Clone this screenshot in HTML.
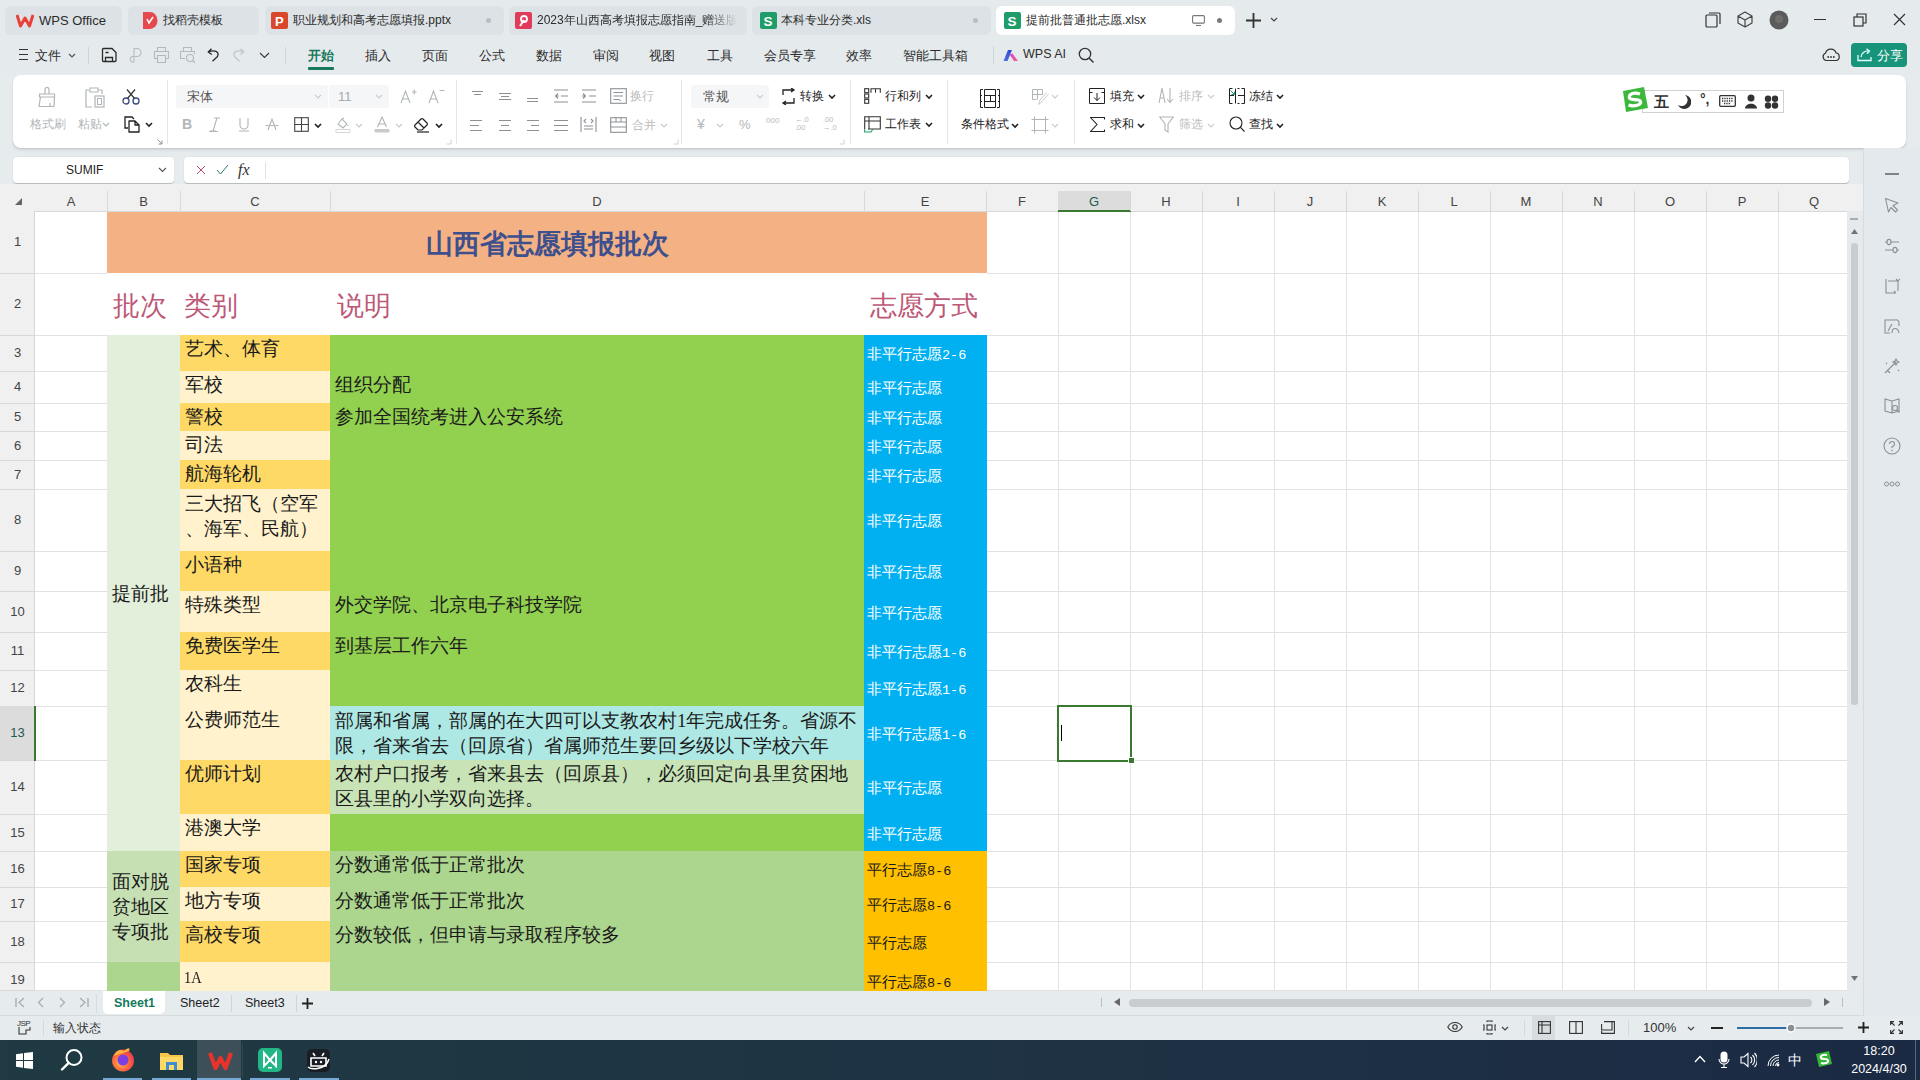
<!DOCTYPE html>
<html><head><meta charset="utf-8"><style>
body{margin:0;width:1920px;height:1080px;position:relative;overflow:hidden;background:#e6ebee;font-family:"Liberation Sans",sans-serif}
body div, body svg{position:absolute}
</style></head><body>
<div style="left:0px;top:0px;width:1920px;height:74px;background:#e5eaed"></div>
<div style="left:5px;top:6px;width:117px;height:29px;background:#dce2e5;border-radius:6px"></div>
<div style="left:128px;top:6px;width:131px;height:29px;background:#dce2e5;border-radius:6px"></div>
<div style="left:265px;top:6px;width:239px;height:29px;background:#dce2e5;border-radius:6px"></div>
<div style="left:509px;top:6px;width:238px;height:29px;background:#dce2e5;border-radius:6px"></div>
<div style="left:752px;top:6px;width:239px;height:29px;background:#dce2e5;border-radius:6px"></div>
<div style="left:996px;top:6px;width:239px;height:29px;background:#ffffff;border-radius:6px"></div>
<svg style="left:16px;top:13px;" width="18" height="15" viewBox="0 0 18 15"><path d="M1 2 L4.5 13 L9 5 L13.5 13 L17 2" fill="none" stroke="#e8413a" stroke-width="3" stroke-linejoin="round"/></svg>
<div style="left:39px;top:12px;white-space:nowrap;font-size:13px;line-height:17px;color:#2b2b2b">WPS Office</div>
<svg style="left:141px;top:11px;" width="17" height="19" viewBox="0 0 17 19"><path d="M2 1 H9 A7.5 8.5 0 0 1 9 18 H2 Z" fill="#e5484d"/><path d="M6 8 L8 12 L12 6" fill="none" stroke="#fff" stroke-width="1.6"/></svg>
<div style="left:163px;top:12px;white-space:nowrap;font-size:12px;line-height:17px;color:#2b2b2b">找稻壳模板</div>
<svg style="left:271px;top:12px;" width="17" height="17" viewBox="0 0 17 17"><rect x="0" y="0" width="17" height="17" rx="2" fill="#d9482b"/><text x="4" y="13.5" font-size="13" font-weight="bold" fill="#fff" font-family="Liberation Sans">P</text></svg>
<div style="left:293px;top:12px;white-space:nowrap;font-size:12px;line-height:17px;color:#2b2b2b">职业规划和高考志愿填报.pptx</div>
<div style="left:486px;top:18px;width:5px;height:5px;background:#b9bec1;border-radius:50%"></div>
<svg style="left:515px;top:12px;" width="17" height="17" viewBox="0 0 17 17"><rect x="0" y="0" width="17" height="17" rx="2" fill="#e23b5a"/><circle cx="9" cy="7" r="3" fill="none" stroke="#fff" stroke-width="1.8"/><path d="M5 14 L9 8" stroke="#fff" stroke-width="2"/></svg>
<div style="left:537px;top:12px;white-space:nowrap;font-size:12px;line-height:17px;color:#2b2b2b;width:200px;overflow:hidden;-webkit-mask-image:linear-gradient(90deg,#000 85%,transparent)">2023年山西高考填报志愿指南_赠送版</div>
<svg style="left:760px;top:12px;" width="17" height="17" viewBox="0 0 17 17"><rect x="0" y="0" width="17" height="17" rx="2" fill="#1f9d68"/><text x="3.5" y="13.5" font-size="13.5" font-weight="bold" fill="#fff" font-family="Liberation Sans">S</text></svg>
<div style="left:781px;top:12px;white-space:nowrap;font-size:12px;line-height:17px;color:#2b2b2b">本科专业分类.xls</div>
<div style="left:973px;top:18px;width:5px;height:5px;background:#b9bec1;border-radius:50%"></div>
<svg style="left:1004px;top:12px;" width="17" height="17" viewBox="0 0 17 17"><rect x="0" y="0" width="17" height="17" rx="2" fill="#1f9d68"/><text x="3.5" y="13.5" font-size="13.5" font-weight="bold" fill="#fff" font-family="Liberation Sans">S</text></svg>
<div style="left:1026px;top:12px;white-space:nowrap;font-size:12px;line-height:17px;color:#2b2b2b">提前批普通批志愿.xlsx</div>
<svg style="left:1192px;top:15px;" width="13" height="11" viewBox="0 0 13 11"><rect x="0.6" y="0.6" width="11.8" height="7.5" rx="1" fill="none" stroke="#777" stroke-width="1.1"/><path d="M4 10.5 H9" stroke="#777" stroke-width="1.1"/></svg>
<div style="left:1217px;top:18px;width:5px;height:5px;background:#7a7a7a;border-radius:50%"></div>
<svg style="left:1246px;top:13px;" width="15" height="15" viewBox="0 0 15 15"><path d="M7.5 0 V15 M0 7.5 H15" stroke="#333" stroke-width="1.8"/></svg>
<svg style="left:1270px;top:17px;" width="8" height="6" viewBox="0 0 8 6"><path d="M1 1 L4 4 L7 1" fill="none" stroke="#444" stroke-width="1.2"/></svg>
<svg style="left:1705px;top:12px;" width="16" height="16" viewBox="0 0 16 16"><rect x="1" y="3" width="11" height="12" rx="1" fill="none" stroke="#333" stroke-width="1.2"/><path d="M4 1 H14 A1 1 0 0 1 15 2 V12" fill="none" stroke="#333" stroke-width="1.2"/></svg>
<svg style="left:1737px;top:11px;" width="16" height="17" viewBox="0 0 16 17"><path d="M8 1 L15 5 V12 L8 16 L1 12 V5 Z M1 5 L8 9 L15 5 M8 9 V16" fill="none" stroke="#444" stroke-width="1.2" stroke-linejoin="round"/></svg>
<svg style="left:1769px;top:10px;" width="20" height="20" viewBox="0 0 20 20"><circle cx="10" cy="10" r="9.5" fill="#5b5b5b"/><circle cx="10" cy="9" r="4" fill="#6e6e6e"/></svg>
<div style="left:1814px;top:19px;width:12px;height:1.3px;background:#333"></div>
<svg style="left:1853px;top:13px;" width="14" height="14" viewBox="0 0 14 14"><rect x="1" y="4" width="9" height="9" fill="none" stroke="#333" stroke-width="1.2"/><path d="M4 4 V1 H13 V10 H10" fill="none" stroke="#333" stroke-width="1.2"/></svg>
<svg style="left:1893px;top:13px;" width="13" height="13" viewBox="0 0 13 13"><path d="M1 1 L12 12 M12 1 L1 12" stroke="#333" stroke-width="1.2"/></svg>
<svg style="left:19px;top:49px;" width="10" height="12" viewBox="0 0 10 12"><path d="M0 0.5 H9 M0 5.5 H9 M0 10.5 H9" stroke="#333" stroke-width="1"/></svg>
<div style="left:35px;top:47px;white-space:nowrap;font-size:13px;line-height:17px;color:#2b2b2b">文件</div>
<svg style="left:68px;top:53px;" width="8" height="5" viewBox="0 0 8 5"><path d="M1 1 L4 4 L7 1" fill="none" stroke="#555" stroke-width="1.2"/></svg>
<div style="left:88px;top:47px;width:1px;height:17px;background:#cfd5d8"></div>
<svg style="left:101px;top:47px;" width="17" height="16" viewBox="0 0 17 16"><path d="M1.5 2.5 A1 1 0 0 1 2.5 1.5 H11 L15 5.5 V13.5 A1 1 0 0 1 14 14.5 H2.5 A1 1 0 0 1 1.5 13.5 Z M4.5 5.5 H7.5 M4.5 14 V10.5 H11.5 V14" fill="none" stroke="#2b2b2b" stroke-width="1.3"/></svg>
<svg style="left:128px;top:47px;" width="14" height="16" viewBox="0 0 14 16"><path d="M6 9.5 V1.5 H9 A4 4 0 0 1 9 9.5 H6 M6 9.5 H4 A3 3 0 0 0 4 15 H6 V9.5" fill="none" stroke="#b5bbbe" stroke-width="1.1"/></svg>
<svg style="left:154px;top:47px;" width="15" height="16" viewBox="0 0 15 16"><path d="M3.5 4.5 V0.5 H11.5 V4.5 M3.5 11.5 H0.5 V4.5 H14.5 V11.5 H11.5 M3.5 8.5 H11.5 V15.5 H3.5 Z" fill="none" stroke="#b3b9bc" stroke-width="1.1"/></svg>
<svg style="left:180px;top:47px;" width="16" height="17" viewBox="0 0 16 17"><path d="M3.5 4.5 V0.5 H11.5 V4.5 M5 11.5 H0.5 V4.5 H14.5 V7" fill="none" stroke="#b3b9bc" stroke-width="1.1"/><circle cx="10" cy="11" r="3.5" fill="none" stroke="#b3b9bc" stroke-width="1.1"/><path d="M12.5 13.5 L15 16" stroke="#b3b9bc" stroke-width="1.1"/></svg>
<svg style="left:207px;top:48px;" width="13" height="14" viewBox="0 0 13 14"><path d="M4.5 0.8 L1.2 4 L4.8 6.5 M1.4 4 C7 1.5 13 3.5 10.5 8.5 L5.5 13.2" fill="none" stroke="#2b2b2b" stroke-width="1.3" stroke-linejoin="round"/></svg>
<svg style="left:232px;top:48px;" width="13" height="14" viewBox="0 0 13 14"><path d="M8.5 0.8 L11.8 4 L8.2 6.5 M11.6 4 C6 1.5 0 3.5 2.5 8.5 L7.5 13.2" fill="none" stroke="#c2c7ca" stroke-width="1.3" stroke-linejoin="round"/></svg>
<svg style="left:259px;top:52px;" width="11" height="7" viewBox="0 0 11 7"><path d="M1 1 L5.5 5.5 L10 1" fill="none" stroke="#3b3b3b" stroke-width="1.2"/></svg>
<div style="left:285px;top:47px;width:1px;height:17px;background:#cfd5d8"></div>
<div style="left:308.1px;top:47px;white-space:nowrap;font-size:13px;line-height:17px;color:#17785c;font-weight:bold">开始</div>
<div style="left:364.8px;top:47px;white-space:nowrap;font-size:13px;line-height:17px;color:#2b2b2b">插入</div>
<div style="left:422.3px;top:47px;white-space:nowrap;font-size:13px;line-height:17px;color:#2b2b2b">页面</div>
<div style="left:479.0px;top:47px;white-space:nowrap;font-size:13px;line-height:17px;color:#2b2b2b">公式</div>
<div style="left:535.5px;top:47px;white-space:nowrap;font-size:13px;line-height:17px;color:#2b2b2b">数据</div>
<div style="left:593.2px;top:47px;white-space:nowrap;font-size:13px;line-height:17px;color:#2b2b2b">审阅</div>
<div style="left:649.1px;top:47px;white-space:nowrap;font-size:13px;line-height:17px;color:#2b2b2b">视图</div>
<div style="left:706.5px;top:47px;white-space:nowrap;font-size:13px;line-height:17px;color:#2b2b2b">工具</div>
<div style="left:763.5px;top:47px;white-space:nowrap;font-size:13px;line-height:17px;color:#2b2b2b">会员专享</div>
<div style="left:846.1px;top:47px;white-space:nowrap;font-size:13px;line-height:17px;color:#2b2b2b">效率</div>
<div style="left:903.2px;top:47px;white-space:nowrap;font-size:13px;line-height:17px;color:#2b2b2b">智能工具箱</div>
<div style="left:308px;top:67px;width:26px;height:2.5px;background:#17785c;border-radius:1px"></div>
<div style="left:993px;top:46px;width:1px;height:18px;background:#cfd5d8"></div>
<svg style="left:1003px;top:49px;" width="16" height="13" viewBox="0 0 16 13"><defs><linearGradient id="ai1" x1="0" y1="1" x2="0.6" y2="0"><stop offset="0" stop-color="#5a6fe0"/><stop offset="1" stop-color="#2f4fd8"/></linearGradient><linearGradient id="ai2" x1="0" y1="0" x2="1" y2="1"><stop offset="0" stop-color="#c44fd0"/><stop offset="1" stop-color="#ff5a8a"/></linearGradient></defs><path d="M0.5 12 L5 1 H9 L4.5 12 Z" fill="url(#ai1)"/><path d="M6.5 5.5 L9.5 4.5 L15 12 H11 Z" fill="url(#ai2)"/></svg>
<div style="left:1023px;top:46px;white-space:nowrap;font-size:12.5px;line-height:17px;color:#2b2b2b">WPS AI</div>
<svg style="left:1078px;top:47px;" width="17" height="17" viewBox="0 0 17 17"><circle cx="7" cy="7" r="5.7" fill="none" stroke="#333" stroke-width="1.3"/><path d="M11 11 L15.5 15.5" stroke="#333" stroke-width="1.4"/></svg>
<svg style="left:1822px;top:47px;" width="18" height="15" viewBox="0 0 18 15"><path d="M4.5 13.5 A3.8 3.8 0 0 1 3.5 6.2 A5.5 5.5 0 0 1 14 5.8 A3.9 3.9 0 0 1 14 13.5 Z" fill="none" stroke="#333" stroke-width="1.2"/><circle cx="6.2" cy="10" r="0.9" fill="#333"/><circle cx="9" cy="10" r="0.9" fill="#333"/><circle cx="11.8" cy="10" r="0.9" fill="#333"/></svg>
<div style="left:1851px;top:43px;width:56px;height:24px;background:#17947a;border-radius:4px"></div>
<svg style="left:1857px;top:48px;" width="16" height="14" viewBox="0 0 16 14"><path d="M1 7 V12.5 H14 V9" fill="none" stroke="#dff" stroke-width="1.3"/><path d="M4 9 A7 7 0 0 1 12 3 M9.5 0.8 L12.5 3 L10 5.8" fill="none" stroke="#dff" stroke-width="1.3"/></svg>
<div style="left:1877px;top:47px;white-space:nowrap;font-size:13px;line-height:17px;color:#ffffff">分享</div>
<div style="left:13px;top:75px;width:1893px;height:73px;background:#fff;border-radius:8px;box-shadow:0 1px 0 #c5cacd,0 2px 3px rgba(0,0,0,0.10)"></div>
<svg style="left:37px;top:87px;" width="21" height="21" viewBox="0 0 21 21"><path d="M8 7 V2.5 A2 2 0 0 1 12 2.5 V7 M2.5 7 H17.5 V10 H2.5 Z M3.5 10 L2 19.5 H17 L17.5 10 M13 19.5 V16" fill="none" stroke="#b0b5b8" stroke-width="1.2" stroke-linejoin="round"/></svg>
<div style="left:30px;top:116px;white-space:nowrap;font-size:12px;line-height:16px;color:#b0b5b8">格式刷</div>
<svg style="left:84px;top:86px;" width="22" height="22" viewBox="0 0 22 22"><path d="M5 4 H2 V21 H8 M15 4 H18 V8 M6 2 H14 V6 H6 Z" fill="none" stroke="#b0b5b8" stroke-width="1.2"/><rect x="11" y="10" width="9" height="11" fill="none" stroke="#b0b5b8" stroke-width="1.2"/><rect x="13.5" y="12.5" width="4" height="6" fill="none" stroke="#b0b5b8" stroke-width="1"/></svg>
<div style="left:77.5px;top:116px;white-space:nowrap;font-size:12px;line-height:16px;color:#b0b5b8">粘贴</div>
<svg style="left:102px;top:122px;" width="8" height="6" viewBox="0 0 8 6"><path d="M1 1 L4 4 L7 1" fill="none" stroke="#b0b5b8" stroke-width="1.1"/></svg>
<svg style="left:122px;top:89px;" width="18" height="16" viewBox="0 0 18 16"><circle cx="4" cy="12" r="3" fill="none" stroke="#3a4a7a" stroke-width="1.3"/><circle cx="14" cy="12" r="3" fill="none" stroke="#3a4a7a" stroke-width="1.3"/><path d="M5.5 9.5 L13 0.5 M12.5 9.5 L5 0.5" stroke="#333" stroke-width="1.2"/></svg>
<svg style="left:124px;top:116px;" width="17" height="17" viewBox="0 0 17 17"><path d="M4 12 H1 V1 H8 L10 3" fill="none" stroke="#222" stroke-width="1.3"/><path d="M5 5 H11 L15 9 V16 H5 Z M11 5 V9 H15" fill="none" stroke="#222" stroke-width="1.3" stroke-linejoin="round"/></svg>
<svg style="left:145px;top:122px;" width="8" height="6" viewBox="0 0 8 6"><path d="M1 1 L4 4 L7 1" fill="none" stroke="#222" stroke-width="1.6"/></svg>
<svg style="left:157px;top:139px;" width="6" height="6" viewBox="0 0 6 6"><path d="M0.5 0.5 L5 5 M5 1.5 V5 H1.5" fill="none" stroke="#888" stroke-width="0.9"/></svg>
<div style="left:167px;top:80px;width:1px;height:64px;background:#e3e6e8"></div>
<div style="left:176px;top:85px;width:152px;height:23px;background:#f5f6f7;border-radius:3px"></div>
<div style="left:329px;top:85px;width:60px;height:23px;background:#f5f6f7;border-radius:3px"></div>
<div style="left:187px;top:89px;white-space:nowrap;font-size:12.5px;line-height:16px;color:#555">宋体</div>
<svg style="left:314px;top:94px;" width="8" height="6" viewBox="0 0 8 6"><path d="M1 1 L4 4 L7 1" fill="none" stroke="#ccc" stroke-width="1.1"/></svg>
<div style="left:338px;top:89px;white-space:nowrap;font-size:13px;line-height:16px;color:#aaa">11</div>
<svg style="left:375px;top:94px;" width="8" height="6" viewBox="0 0 8 6"><path d="M1 1 L4 4 L7 1" fill="none" stroke="#ccc" stroke-width="1.1"/></svg>
<svg style="left:400px;top:88px;" width="17" height="16" viewBox="0 0 17 16"><path d="M1 15 L5.5 3 L10 15 M2.7 11 H8.3 M12 4 H16.5 M14.25 1.5 V6.5" fill="none" stroke="#b0b5b8" stroke-width="1.1"/></svg>
<svg style="left:428px;top:88px;" width="17" height="16" viewBox="0 0 17 16"><path d="M1 15 L5.5 3 L10 15 M2.7 11 H8.3 M11.5 2.5 H16.5" fill="none" stroke="#b0b5b8" stroke-width="1.1"/></svg>
<div style="left:456px;top:80px;width:1px;height:64px;background:#e3e6e8"></div>
<div style="left:182px;top:116px;white-space:nowrap;font-size:14px;line-height:17px;color:#b0b5b8;font-weight:bold">B</div>
<svg style="left:208px;top:117px;" width="14" height="15" viewBox="0 0 14 15"><path d="M6 1 H12 M2 14 H8 M9 1 L5 14 M1 14.5 H10" fill="none" stroke="#b0b5b8" stroke-width="1.1"/></svg>
<svg style="left:238px;top:117px;" width="12" height="15" viewBox="0 0 12 15"><path d="M2 1 V8 A4 4 0 0 0 10 8 V1 M1 14 H11" fill="none" stroke="#b0b5b8" stroke-width="1.1"/></svg>
<svg style="left:265px;top:117px;" width="14" height="15" viewBox="0 0 14 15"><path d="M3 13 L7 2 L11 13 M0.5 8.5 H13.5" fill="none" stroke="#b0b5b8" stroke-width="1.1"/></svg>
<svg style="left:294px;top:117px;" width="15" height="15" viewBox="0 0 15 15"><rect x="0.7" y="0.7" width="13.6" height="13.6" fill="none" stroke="#444" stroke-width="1.1"/><path d="M7.5 0.7 V14.3 M0.7 7.5 H14.3" stroke="#444" stroke-width="1.1"/></svg>
<svg style="left:314px;top:123px;" width="8" height="6" viewBox="0 0 8 6"><path d="M1 1 L4 4 L7 1" fill="none" stroke="#222" stroke-width="1.7"/></svg>
<svg style="left:335px;top:116px;" width="16" height="17" viewBox="0 0 16 17"><path d="M3 8 L7 3 L12 8 L8 12 Z M9 2 L7 3 M13 9 V10" fill="none" stroke="#b0b5b8" stroke-width="1.1"/><rect x="1" y="13.5" width="14" height="3" fill="none" stroke="#d6d9db" stroke-width="1"/></svg>
<svg style="left:355px;top:123px;" width="8" height="6" viewBox="0 0 8 6"><path d="M1 1 L4 4 L7 1" fill="none" stroke="#c8c8c8" stroke-width="1.1"/></svg>
<svg style="left:374px;top:116px;" width="16" height="17" viewBox="0 0 16 17"><path d="M3.5 11 L8 1 L12.5 11 M5 8 H11" fill="none" stroke="#b0b5b8" stroke-width="1.1"/><rect x="0.5" y="13" width="15" height="3.5" rx="1" fill="#c8cbcd"/></svg>
<svg style="left:395px;top:123px;" width="8" height="6" viewBox="0 0 8 6"><path d="M1 1 L4 4 L7 1" fill="none" stroke="#c8c8c8" stroke-width="1.1"/></svg>
<svg style="left:413px;top:116px;" width="18" height="17" viewBox="0 0 18 17"><path d="M2 9 L8 3 A1.5 1.5 0 0 1 10 3 L14 7 A1.5 1.5 0 0 1 14 9 L9 14 H5 L2 11 A1.4 1.4 0 0 1 2 9 Z M5 6 L11 12" fill="none" stroke="#222" stroke-width="1.2"/><path d="M4 16 H16" stroke="#222" stroke-width="1.2"/></svg>
<svg style="left:435px;top:123px;" width="8" height="6" viewBox="0 0 8 6"><path d="M1 1 L4 4 L7 1" fill="none" stroke="#222" stroke-width="1.7"/></svg>
<svg style="left:446px;top:139px;" width="6" height="6" viewBox="0 0 6 6"><path d="M5 0.5 V5 H0.5" fill="none" stroke="#ccc" stroke-width="0.9"/></svg>
<svg style="left:470px;top:89px;" width="16" height="14" viewBox="0 0 16 14"><path d="M2 2.5 H13" stroke="#8c9195" stroke-width="1"/><path d="M4 5.5 H11" stroke="#8c9195" stroke-width="1"/></svg>
<svg style="left:497px;top:89px;" width="16" height="14" viewBox="0 0 16 14"><path d="M2 4.5 H14" stroke="#8c9195" stroke-width="1"/><path d="M4 7.5 H12" stroke="#8c9195" stroke-width="1"/><path d="M2 10.5 H14" stroke="#8c9195" stroke-width="1"/></svg>
<svg style="left:525px;top:89px;" width="16" height="14" viewBox="0 0 16 14"><path d="M2 9.5 H13" stroke="#8c9195" stroke-width="1"/><path d="M2 12.5 H13" stroke="#8c9195" stroke-width="1"/></svg>
<svg style="left:553px;top:89px;" width="16" height="14" viewBox="0 0 16 14"><path d="M1 1 H15 M8 7 H15 M1 13 H15 M5 4.5 L2.5 7 L5 9.5 M2.5 7 H6" fill="none" stroke="#8c9195" stroke-width="1.1"/></svg>
<svg style="left:581px;top:89px;" width="16" height="14" viewBox="0 0 16 14"><path d="M1 1 H15 M8 7 H15 M1 13 H15 M2 4.5 L4.5 7 L2 9.5 M4.5 7 H1" fill="none" stroke="#8c9195" stroke-width="1.1"/></svg>
<svg style="left:610px;top:88px;" width="17" height="16" viewBox="0 0 17 16"><rect x="0.7" y="0.7" width="15.6" height="14.6" fill="none" stroke="#8c9195" stroke-width="1.1"/><path d="M3.5 4.5 H13 M3.5 8 H13 M3.5 11.5 H9 L11 13" fill="none" stroke="#8c9195" stroke-width="1"/></svg>
<div style="left:630px;top:88px;white-space:nowrap;font-size:12px;line-height:16px;color:#bbb">换行</div>
<svg style="left:469px;top:118px;" width="16" height="14" viewBox="0 0 16 14"><path d="M1 2.5 H13" stroke="#8c9195" stroke-width="1"/><path d="M1 7.5 H10" stroke="#8c9195" stroke-width="1"/><path d="M1 12.5 H13" stroke="#8c9195" stroke-width="1"/></svg>
<svg style="left:497px;top:118px;" width="16" height="14" viewBox="0 0 16 14"><path d="M2 2.5 H14" stroke="#8c9195" stroke-width="1"/><path d="M4 7.5 H12" stroke="#8c9195" stroke-width="1"/><path d="M2 12.5 H14" stroke="#8c9195" stroke-width="1"/></svg>
<svg style="left:525px;top:118px;" width="16" height="14" viewBox="0 0 16 14"><path d="M2 2.5 H14" stroke="#8c9195" stroke-width="1"/><path d="M6 7.5 H14" stroke="#8c9195" stroke-width="1"/><path d="M2 12.5 H14" stroke="#8c9195" stroke-width="1"/></svg>
<svg style="left:553px;top:118px;" width="16" height="14" viewBox="0 0 16 14"><path d="M1 2.5 H15" stroke="#8c9195" stroke-width="1"/><path d="M1 7.5 H15" stroke="#8c9195" stroke-width="1"/><path d="M1 12.5 H15" stroke="#8c9195" stroke-width="1"/></svg>
<svg style="left:580px;top:116px;" width="17" height="17" viewBox="0 0 17 17"><path d="M1 1 V16 M16 1 V16 M4 10 H13 M4 13 H13 M6 3 L4 5 L6 7 M11 3 L13 5 L11 7" fill="none" stroke="#8c9195" stroke-width="1.1"/></svg>
<svg style="left:610px;top:117px;" width="17" height="16" viewBox="0 0 17 16"><rect x="0.7" y="0.7" width="15.6" height="14.6" fill="none" stroke="#8c9195" stroke-width="1.1"/><path d="M0.7 5 H16.3 M0.7 10 H16.3 M6 0.7 V5 M11 0.7 V5" fill="none" stroke="#8c9195" stroke-width="1"/></svg>
<div style="left:632px;top:117px;white-space:nowrap;font-size:12px;line-height:16px;color:#bbb">合并</div>
<svg style="left:660px;top:123px;" width="8" height="6" viewBox="0 0 8 6"><path d="M1 1 L4 4 L7 1" fill="none" stroke="#c8c8c8" stroke-width="1.1"/></svg>
<svg style="left:673px;top:139px;" width="6" height="6" viewBox="0 0 6 6"><path d="M5 0.5 V5 H0.5" fill="none" stroke="#ccc" stroke-width="0.9"/></svg>
<div style="left:681px;top:80px;width:1px;height:64px;background:#e3e6e8"></div>
<div style="left:691px;top:85px;width:78px;height:23px;background:#f5f6f7;border-radius:3px"></div>
<div style="left:703px;top:89px;white-space:nowrap;font-size:12.5px;line-height:16px;color:#555">常规</div>
<svg style="left:756px;top:94px;" width="8" height="6" viewBox="0 0 8 6"><path d="M1 1 L4 4 L7 1" fill="none" stroke="#ccc" stroke-width="1.1"/></svg>
<svg style="left:780px;top:88px;" width="17" height="17" viewBox="0 0 17 17"><path d="M3 5 V2 H14 M11 0 L14 2 L11 4 M14 12 V15 H3 M6 13 L3 15 L6 17 M3 2 V7 M14 10 V15" fill="none" stroke="#222" stroke-width="1.3"/></svg>
<div style="left:800px;top:88px;white-space:nowrap;font-size:12px;line-height:16px;color:#222;font-weight:500">转换</div>
<svg style="left:828px;top:94px;" width="8" height="6" viewBox="0 0 8 6"><path d="M1 1 L4 4 L7 1" fill="none" stroke="#222" stroke-width="1.6"/></svg>
<div style="left:697px;top:116px;white-space:nowrap;font-size:14px;line-height:17px;color:#b0b5b8">¥</div>
<svg style="left:716px;top:123px;" width="8" height="6" viewBox="0 0 8 6"><path d="M1 1 L4 4 L7 1" fill="none" stroke="#c8c8c8" stroke-width="1.1"/></svg>
<div style="left:739px;top:117px;white-space:nowrap;font-size:13px;line-height:16px;color:#b0b5b8">%</div>
<div style="left:766px;top:117px;white-space:nowrap;font-size:8px;line-height:8px;color:#bbb">000</div>
<div style="left:795px;top:116px;white-space:nowrap;font-size:7.5px;line-height:8px;color:#bbb">←.0<br>.00</div>
<div style="left:823px;top:116px;white-space:nowrap;font-size:7.5px;line-height:8px;color:#bbb">.00<br>→.0</div>
<svg style="left:839px;top:139px;" width="6" height="6" viewBox="0 0 6 6"><path d="M5 0.5 V5 H0.5" fill="none" stroke="#ccc" stroke-width="0.9"/></svg>
<div style="left:850px;top:80px;width:1px;height:64px;background:#e3e6e8"></div>
<svg style="left:864px;top:88px;" width="17" height="16" viewBox="0 0 17 16"><rect x="0.7" y="0.7" width="4" height="4" fill="none" stroke="#333" stroke-width="1.1"/><rect x="0.7" y="6" width="4" height="4" fill="none" stroke="#333" stroke-width="1.1"/><rect x="0.7" y="11.3" width="4" height="4" fill="none" stroke="#333" stroke-width="1.1"/><path d="M7 4.7 V0.7 H16.3 V4.7 M11.5 0.7 V4.7" fill="none" stroke="#333" stroke-width="1.1"/></svg>
<div style="left:885px;top:88px;white-space:nowrap;font-size:12px;line-height:16px;color:#222;font-weight:500">行和列</div>
<svg style="left:925px;top:94px;" width="8" height="6" viewBox="0 0 8 6"><path d="M1 1 L4 4 L7 1" fill="none" stroke="#222" stroke-width="1.6"/></svg>
<svg style="left:864px;top:116px;" width="17" height="17" viewBox="0 0 17 17"><path d="M0.7 13 V0.7 H16.3 V13 H4 M0.7 5 H16.3 M5 0.7 V13" fill="none" stroke="#333" stroke-width="1.1"/><path d="M0.7 13 V16 H7 L9 13" fill="none" stroke="#1f9d68" stroke-width="1.1"/></svg>
<div style="left:885px;top:116px;white-space:nowrap;font-size:12px;line-height:16px;color:#222;font-weight:500">工作表</div>
<svg style="left:925px;top:122px;" width="8" height="6" viewBox="0 0 8 6"><path d="M1 1 L4 4 L7 1" fill="none" stroke="#222" stroke-width="1.6"/></svg>
<div style="left:947px;top:80px;width:1px;height:64px;background:#e3e6e8"></div>
<svg style="left:979px;top:88px;" width="22" height="21" viewBox="0 0 22 21"><path d="M4 1.5 H1.5 V19.5 H4 M1.5 7.5 H3 M1.5 13.5 H3 M18 1.5 H20.5 V19.5 H18 M20.5 7.5 H19 M20.5 13.5 H19 M5.5 1.5 H16.5 V19.5 H5.5 Z M5.5 7.5 H16.5 M5.5 13.5 H16.5 M11.5 7.5 V13.5" fill="none" stroke="#222" stroke-width="1"/></svg>
<div style="left:961px;top:116px;white-space:nowrap;font-size:12px;line-height:16px;color:#222;font-weight:500">条件格式</div>
<svg style="left:1011px;top:123px;" width="8" height="6" viewBox="0 0 8 6"><path d="M1 1 L4 4 L7 1" fill="none" stroke="#222" stroke-width="1.6"/></svg>
<svg style="left:1031px;top:88px;" width="20" height="20" viewBox="0 0 20 20"><path d="M1.5 1.5 H11.5 V6.5 M1.5 1.5 V11.5 H5.5 M1.5 6.5 H11.5 M6.5 1.5 V11.5" fill="none" stroke="#b0b5b8" stroke-width="1"/><path d="M15.5 4.5 L9 12 M17.5 6 L11 13.5 M9 12 L7.5 16.5 L11 13.5" fill="none" stroke="#c9cccf" stroke-width="1"/></svg>
<svg style="left:1051px;top:94px;" width="8" height="6" viewBox="0 0 8 6"><path d="M1 1 L4 4 L7 1" fill="none" stroke="#ccc" stroke-width="1.1"/></svg>
<svg style="left:1031px;top:116px;" width="18" height="18" viewBox="0 0 18 18"><path d="M3.5 0.5 V17.5 M14.5 0.5 V17.5 M0.5 3.5 H17.5 M0.5 14.5 H17.5" fill="none" stroke="#b0b5b8" stroke-width="1"/></svg>
<svg style="left:1051px;top:123px;" width="8" height="6" viewBox="0 0 8 6"><path d="M1 1 L4 4 L7 1" fill="none" stroke="#ccc" stroke-width="1.1"/></svg>
<div style="left:1074px;top:80px;width:1px;height:64px;background:#e3e6e8"></div>
<svg style="left:1089px;top:88px;" width="16" height="16" viewBox="0 0 16 16"><path d="M0.5 0.5 H15.5 V15.5 H0.5 Z M0.5 4.5 H3.5 M12.5 4.5 H15.5 M8 5 V12.5 M5 9.5 L8 12.5 L11 9.5" fill="none" stroke="#222" stroke-width="1"/></svg>
<div style="left:1109.5px;top:88px;white-space:nowrap;font-size:12px;line-height:16px;color:#222;font-weight:500">填充</div>
<svg style="left:1137px;top:94px;" width="8" height="6" viewBox="0 0 8 6"><path d="M1 1 L4 4 L7 1" fill="none" stroke="#222" stroke-width="1.6"/></svg>
<svg style="left:1090px;top:117px;" width="15" height="15" viewBox="0 0 15 15"><path d="M14.5 2.5 V0.5 H0.5 L7 7.5 L0.5 14.5 H14.5 V12.5" fill="none" stroke="#222" stroke-width="1.1"/></svg>
<div style="left:1109.5px;top:116px;white-space:nowrap;font-size:12px;line-height:16px;color:#222;font-weight:500">求和</div>
<svg style="left:1137px;top:123px;" width="8" height="6" viewBox="0 0 8 6"><path d="M1 1 L4 4 L7 1" fill="none" stroke="#222" stroke-width="1.6"/></svg>
<svg style="left:1158px;top:87px;" width="17" height="17" viewBox="0 0 17 17"><path d="M1 16 L4 1 L7 16 M2 11 H6 M12 1 V15 M9 12 L12 15.5 L15 12" fill="none" stroke="#b0b5b8" stroke-width="1.1"/></svg>
<div style="left:1179px;top:88px;white-space:nowrap;font-size:12px;line-height:16px;color:#bbb">排序</div>
<svg style="left:1207px;top:94px;" width="8" height="6" viewBox="0 0 8 6"><path d="M1 1 L4 4 L7 1" fill="none" stroke="#ccc" stroke-width="1.1"/></svg>
<svg style="left:1159px;top:116px;" width="15" height="17" viewBox="0 0 15 17"><path d="M0.7 1 H14.3 L9 8 V16 L6 14 V8 Z" fill="none" stroke="#b0b5b8" stroke-width="1.1"/></svg>
<div style="left:1179px;top:116px;white-space:nowrap;font-size:12px;line-height:16px;color:#bbb">筛选</div>
<svg style="left:1207px;top:123px;" width="8" height="6" viewBox="0 0 8 6"><path d="M1 1 L4 4 L7 1" fill="none" stroke="#ccc" stroke-width="1.1"/></svg>
<svg style="left:1228px;top:88px;" width="18" height="16" viewBox="0 0 18 16"><path d="M4.5 0.5 H1.5 V15.5 H4.5 M13.5 0.5 H16.5 V15.5 H13.5 M7.5 0.5 V15.5 M1.5 7.5 H6 M10 7.5 H16.5 M9.5 0.5 H11.5 M9.5 15.5 H11.5" fill="none" stroke="#222" stroke-width="1"/><path d="M2.5 2.5 L6.5 6.5 M6.5 3.5 V6.5 H3.5" fill="none" stroke="#1f9d68" stroke-width="1"/></svg>
<div style="left:1249px;top:88px;white-space:nowrap;font-size:12px;line-height:16px;color:#222;font-weight:500">冻结</div>
<svg style="left:1276px;top:94px;" width="8" height="6" viewBox="0 0 8 6"><path d="M1 1 L4 4 L7 1" fill="none" stroke="#222" stroke-width="1.6"/></svg>
<svg style="left:1229px;top:116px;" width="17" height="17" viewBox="0 0 17 17"><circle cx="7" cy="7" r="6" fill="none" stroke="#222" stroke-width="1.1"/><path d="M11.2 11.2 L15.5 15.5" stroke="#222" stroke-width="1.1"/></svg>
<div style="left:1249px;top:116px;white-space:nowrap;font-size:12px;line-height:16px;color:#222;font-weight:500">查找</div>
<svg style="left:1276px;top:123px;" width="8" height="6" viewBox="0 0 8 6"><path d="M1 1 L4 4 L7 1" fill="none" stroke="#222" stroke-width="1.6"/></svg>
<div style="left:1642px;top:90px;width:142px;height:23px;background:#fff;border:1px solid #cfd2d4;box-sizing:border-box"></div>
<svg style="left:1620px;top:86px;" width="30" height="28" viewBox="0 0 30 28"><path d="M3 5 L24 1 L28 22 L6 26 Z" fill="#3cb83c"/><path d="M20 8 C14 6 8 8 9.5 12 C11 15 19 12 20.5 15.5 C22 19 14 21 8.5 19" fill="none" stroke="#fff" stroke-width="3.2"/></svg>
<div style="left:1654px;top:92px;white-space:nowrap;font-size:15px;line-height:19px;color:#333;font-weight:bold">五</div>
<svg style="left:1677px;top:94px;" width="14" height="15" viewBox="0 0 14 15"><path d="M8 1 A7 7 0 1 1 1 11 A6 6 0 0 0 8 1 Z" fill="#333"/></svg>
<div style="left:1700px;top:90px;white-space:nowrap;font-size:14px;line-height:19px;color:#333;font-weight:bold">°,</div>
<svg style="left:1719px;top:95px;" width="17" height="12" viewBox="0 0 17 12"><rect x="0.7" y="0.7" width="15.6" height="10.6" rx="1" fill="none" stroke="#333" stroke-width="1.3"/><path d="M3 3.5 H14 M3 6 H14 M5 8.5 H12" stroke="#333" stroke-width="1.3" stroke-dasharray="1.3 1"/></svg>
<svg style="left:1744px;top:94px;" width="14" height="15" viewBox="0 0 14 15"><circle cx="7" cy="4" r="3.5" fill="#333"/><path d="M1 14.5 C1 8 13 8 13 14.5 Z" fill="#333"/></svg>
<svg style="left:1764px;top:95px;" width="15" height="14" viewBox="0 0 15 14"><circle cx="4" cy="3.8" r="3.2" fill="#333"/><circle cx="11" cy="3.8" r="3.2" fill="#333"/><circle cx="4" cy="10.5" r="3.2" fill="#333"/><circle cx="11" cy="10.5" r="3.2" fill="#333"/></svg>
<div style="left:35px;top:211px;width:1812px;height:780px;background:#fff"></div>
<div style="left:107px;top:211px;width:1px;height:780px;background:#e2e2e2"></div>
<div style="left:180px;top:211px;width:1px;height:780px;background:#e2e2e2"></div>
<div style="left:330px;top:211px;width:1px;height:780px;background:#e2e2e2"></div>
<div style="left:864px;top:211px;width:1px;height:780px;background:#e2e2e2"></div>
<div style="left:986px;top:211px;width:1px;height:780px;background:#e2e2e2"></div>
<div style="left:1058px;top:211px;width:1px;height:780px;background:#e2e2e2"></div>
<div style="left:1130px;top:211px;width:1px;height:780px;background:#e2e2e2"></div>
<div style="left:1202px;top:211px;width:1px;height:780px;background:#e2e2e2"></div>
<div style="left:1274px;top:211px;width:1px;height:780px;background:#e2e2e2"></div>
<div style="left:1346px;top:211px;width:1px;height:780px;background:#e2e2e2"></div>
<div style="left:1418px;top:211px;width:1px;height:780px;background:#e2e2e2"></div>
<div style="left:1490px;top:211px;width:1px;height:780px;background:#e2e2e2"></div>
<div style="left:1562px;top:211px;width:1px;height:780px;background:#e2e2e2"></div>
<div style="left:1634px;top:211px;width:1px;height:780px;background:#e2e2e2"></div>
<div style="left:1706px;top:211px;width:1px;height:780px;background:#e2e2e2"></div>
<div style="left:1778px;top:211px;width:1px;height:780px;background:#e2e2e2"></div>
<div style="left:35px;top:273px;width:1812px;height:1px;background:#e2e2e2"></div>
<div style="left:35px;top:335px;width:1812px;height:1px;background:#e2e2e2"></div>
<div style="left:35px;top:371px;width:1812px;height:1px;background:#e2e2e2"></div>
<div style="left:35px;top:403px;width:1812px;height:1px;background:#e2e2e2"></div>
<div style="left:35px;top:431px;width:1812px;height:1px;background:#e2e2e2"></div>
<div style="left:35px;top:460px;width:1812px;height:1px;background:#e2e2e2"></div>
<div style="left:35px;top:489px;width:1812px;height:1px;background:#e2e2e2"></div>
<div style="left:35px;top:551px;width:1812px;height:1px;background:#e2e2e2"></div>
<div style="left:35px;top:591px;width:1812px;height:1px;background:#e2e2e2"></div>
<div style="left:35px;top:632px;width:1812px;height:1px;background:#e2e2e2"></div>
<div style="left:35px;top:670px;width:1812px;height:1px;background:#e2e2e2"></div>
<div style="left:35px;top:706px;width:1812px;height:1px;background:#e2e2e2"></div>
<div style="left:35px;top:760px;width:1812px;height:1px;background:#e2e2e2"></div>
<div style="left:35px;top:814px;width:1812px;height:1px;background:#e2e2e2"></div>
<div style="left:35px;top:851px;width:1812px;height:1px;background:#e2e2e2"></div>
<div style="left:35px;top:887px;width:1812px;height:1px;background:#e2e2e2"></div>
<div style="left:35px;top:921px;width:1812px;height:1px;background:#e2e2e2"></div>
<div style="left:35px;top:962px;width:1812px;height:1px;background:#e2e2e2"></div>
<div style="left:35px;top:990px;width:1812px;height:1px;background:#e2e2e2"></div>
<div style="left:107px;top:211px;width:880px;height:63px;background:#f4b183"></div>
<div style="left:107px;top:273px;width:880px;height:63px;background:#ffffff"></div>
<div style="left:107px;top:335px;width:74px;height:517px;background:#e2efda"></div>
<div style="left:107px;top:851px;width:74px;height:112px;background:#c6e0b4"></div>
<div style="left:107px;top:962px;width:74px;height:29px;background:#acd58e"></div>
<div style="left:180px;top:335px;width:151px;height:37px;background:#ffd966"></div>
<div style="left:180px;top:371px;width:151px;height:33px;background:#fff2cc"></div>
<div style="left:180px;top:403px;width:151px;height:29px;background:#ffd966"></div>
<div style="left:180px;top:431px;width:151px;height:30px;background:#fff2cc"></div>
<div style="left:180px;top:460px;width:151px;height:30px;background:#ffd966"></div>
<div style="left:180px;top:489px;width:151px;height:63px;background:#fff2cc"></div>
<div style="left:180px;top:551px;width:151px;height:41px;background:#ffd966"></div>
<div style="left:180px;top:591px;width:151px;height:42px;background:#fff2cc"></div>
<div style="left:180px;top:632px;width:151px;height:39px;background:#ffd966"></div>
<div style="left:180px;top:670px;width:151px;height:37px;background:#fff2cc"></div>
<div style="left:180px;top:706px;width:151px;height:55px;background:#fff2cc"></div>
<div style="left:180px;top:760px;width:151px;height:55px;background:#ffd966"></div>
<div style="left:180px;top:814px;width:151px;height:38px;background:#fff2cc"></div>
<div style="left:180px;top:851px;width:151px;height:37px;background:#ffd966"></div>
<div style="left:180px;top:887px;width:151px;height:35px;background:#fff2cc"></div>
<div style="left:180px;top:921px;width:151px;height:42px;background:#ffd966"></div>
<div style="left:180px;top:962px;width:151px;height:29px;background:#fff2cc"></div>
<div style="left:330px;top:335px;width:535px;height:372px;background:#92d050"></div>
<div style="left:330px;top:706px;width:535px;height:55px;background:#aee8e4"></div>
<div style="left:330px;top:760px;width:535px;height:55px;background:#c8e4b6"></div>
<div style="left:330px;top:814px;width:535px;height:38px;background:#92d050"></div>
<div style="left:330px;top:851px;width:535px;height:140px;background:#acd58e"></div>
<div style="left:864px;top:335px;width:123px;height:517px;background:#00b0f0"></div>
<div style="left:864px;top:851px;width:123px;height:140px;background:#ffc000"></div>
<div style="left:107px;top:226px;white-space:nowrap;font-family:'Liberation Serif',serif;font-weight:350;width:880px;text-align:center;font-size:26.5px;line-height:36px;font-weight:bold;color:#3d4f8c">山西省志愿填报批次</div>
<div style="left:113px;top:289px;white-space:nowrap;font-family:'Liberation Serif',serif;font-weight:350;font-size:26.5px;line-height:34px;color:#bd5877;font-weight:300">批次</div>
<div style="left:184px;top:289px;white-space:nowrap;font-family:'Liberation Serif',serif;font-weight:350;font-size:26.5px;line-height:34px;color:#bd5877;font-weight:300">类别</div>
<div style="left:337px;top:289px;white-space:nowrap;font-family:'Liberation Serif',serif;font-weight:350;font-size:26.5px;line-height:34px;color:#bd5877;font-weight:300">说明</div>
<div style="left:870px;top:289px;white-space:nowrap;font-family:'Liberation Serif',serif;font-weight:350;font-size:26.5px;line-height:34px;color:#bd5877;font-weight:300">志愿方式</div>
<div style="left:184px;top:966px;white-space:nowrap;font-family:'Liberation Serif',serif;font-size:17px;line-height:24px;color:#1a1a1a;transform:scaleX(0.85);transform-origin:0 0">1A</div>
<div style="left:184.5px;top:337px;white-space:nowrap;font-family:'Liberation Serif',serif;font-weight:350;font-size:18.9px;line-height:24px;color:#1a1a1a">艺术、体育</div>
<div style="left:184.5px;top:373px;white-space:nowrap;font-family:'Liberation Serif',serif;font-weight:350;font-size:18.9px;line-height:24px;color:#1a1a1a">军校</div>
<div style="left:184.5px;top:405px;white-space:nowrap;font-family:'Liberation Serif',serif;font-weight:350;font-size:18.9px;line-height:24px;color:#1a1a1a">警校</div>
<div style="left:184.5px;top:433px;white-space:nowrap;font-family:'Liberation Serif',serif;font-weight:350;font-size:18.9px;line-height:24px;color:#1a1a1a">司法</div>
<div style="left:184.5px;top:462px;white-space:nowrap;font-family:'Liberation Serif',serif;font-weight:350;font-size:18.9px;line-height:24px;color:#1a1a1a">航海轮机</div>
<div style="left:184.5px;top:553px;white-space:nowrap;font-family:'Liberation Serif',serif;font-weight:350;font-size:18.9px;line-height:24px;color:#1a1a1a">小语种</div>
<div style="left:184.5px;top:593px;white-space:nowrap;font-family:'Liberation Serif',serif;font-weight:350;font-size:18.9px;line-height:24px;color:#1a1a1a">特殊类型</div>
<div style="left:184.5px;top:634px;white-space:nowrap;font-family:'Liberation Serif',serif;font-weight:350;font-size:18.9px;line-height:24px;color:#1a1a1a">免费医学生</div>
<div style="left:184.5px;top:672px;white-space:nowrap;font-family:'Liberation Serif',serif;font-weight:350;font-size:18.9px;line-height:24px;color:#1a1a1a">农科生</div>
<div style="left:184.5px;top:708px;white-space:nowrap;font-family:'Liberation Serif',serif;font-weight:350;font-size:18.9px;line-height:24px;color:#1a1a1a">公费师范生</div>
<div style="left:184.5px;top:762px;white-space:nowrap;font-family:'Liberation Serif',serif;font-weight:350;font-size:18.9px;line-height:24px;color:#1a1a1a">优师计划</div>
<div style="left:184.5px;top:816px;white-space:nowrap;font-family:'Liberation Serif',serif;font-weight:350;font-size:18.9px;line-height:24px;color:#1a1a1a">港澳大学</div>
<div style="left:184.5px;top:853px;white-space:nowrap;font-family:'Liberation Serif',serif;font-weight:350;font-size:18.9px;line-height:24px;color:#1a1a1a">国家专项</div>
<div style="left:184.5px;top:889px;white-space:nowrap;font-family:'Liberation Serif',serif;font-weight:350;font-size:18.9px;line-height:24px;color:#1a1a1a">地方专项</div>
<div style="left:184.5px;top:923px;white-space:nowrap;font-family:'Liberation Serif',serif;font-weight:350;font-size:18.9px;line-height:24px;color:#1a1a1a">高校专项</div>
<div style="left:184.5px;top:491px;white-space:nowrap;font-family:'Liberation Serif',serif;font-weight:350;font-size:18.9px;line-height:25px;color:#1a1a1a">三大招飞（空军<br>、海军、民航）</div>
<div style="left:335px;top:373px;white-space:nowrap;font-family:'Liberation Serif',serif;font-weight:350;font-size:18.9px;line-height:24px;color:#1a1a1a">组织分配</div>
<div style="left:335px;top:405px;white-space:nowrap;font-family:'Liberation Serif',serif;font-weight:350;font-size:18.9px;line-height:24px;color:#1a1a1a">参加全国统考进入公安系统</div>
<div style="left:335px;top:593px;white-space:nowrap;font-family:'Liberation Serif',serif;font-weight:350;font-size:18.9px;line-height:24px;color:#1a1a1a">外交学院、北京电子科技学院</div>
<div style="left:335px;top:634px;white-space:nowrap;font-family:'Liberation Serif',serif;font-weight:350;font-size:18.9px;line-height:24px;color:#1a1a1a">到基层工作六年</div>
<div style="left:335px;top:853px;white-space:nowrap;font-family:'Liberation Serif',serif;font-weight:350;font-size:18.9px;line-height:24px;color:#1a1a1a">分数通常低于正常批次</div>
<div style="left:335px;top:889px;white-space:nowrap;font-family:'Liberation Serif',serif;font-weight:350;font-size:18.9px;line-height:24px;color:#1a1a1a">分数通常低于正常批次</div>
<div style="left:335px;top:923px;white-space:nowrap;font-family:'Liberation Serif',serif;font-weight:350;font-size:18.9px;line-height:24px;color:#1a1a1a">分数较低，但申请与录取程序较多</div>
<div style="left:335px;top:709px;white-space:nowrap;font-family:'Liberation Serif',serif;font-weight:350;font-size:18.9px;line-height:24.5px;color:#1a1a1a">部属和省属，部属的在大四可以支教农村1年完成任务。省源不<br>限，省来省去（回原省）省属师范生要回乡级以下学校六年</div>
<div style="left:335px;top:761px;white-space:nowrap;font-family:'Liberation Serif',serif;font-weight:350;font-size:18.9px;line-height:25px;color:#1a1a1a">农村户口报考，省来县去（回原县），必须回定向县里贫困地<br>区县里的小学双向选择。</div>
<div style="left:112px;top:581px;white-space:nowrap;font-family:'Liberation Serif',serif;font-weight:350;font-size:18.9px;line-height:25px;color:#1a1a1a">提前批</div>
<div style="left:112px;top:869px;white-space:nowrap;font-family:'Liberation Serif',serif;font-weight:350;font-size:18.9px;line-height:25px;color:#1a1a1a">面对脱<br>贫地区<br>专项批</div>
<div style="left:867px;top:338px;white-space:nowrap;font-family:'Liberation Mono',monospace;font-weight:350;font-size:15px;height:36px;line-height:36px;color:#fff">非平行志愿<span style='font-size:13.5px'>2-6</span></div>
<div style="left:867px;top:374px;white-space:nowrap;font-family:'Liberation Mono',monospace;font-weight:350;font-size:15px;height:32px;line-height:32px;color:#fff">非平行志愿</div>
<div style="left:867px;top:406px;white-space:nowrap;font-family:'Liberation Mono',monospace;font-weight:350;font-size:15px;height:28px;line-height:28px;color:#fff">非平行志愿</div>
<div style="left:867px;top:434px;white-space:nowrap;font-family:'Liberation Mono',monospace;font-weight:350;font-size:15px;height:29px;line-height:29px;color:#fff">非平行志愿</div>
<div style="left:867px;top:463px;white-space:nowrap;font-family:'Liberation Mono',monospace;font-weight:350;font-size:15px;height:29px;line-height:29px;color:#fff">非平行志愿</div>
<div style="left:867px;top:492px;white-space:nowrap;font-family:'Liberation Mono',monospace;font-weight:350;font-size:15px;height:62px;line-height:62px;color:#fff">非平行志愿</div>
<div style="left:867px;top:554px;white-space:nowrap;font-family:'Liberation Mono',monospace;font-weight:350;font-size:15px;height:40px;line-height:40px;color:#fff">非平行志愿</div>
<div style="left:867px;top:594px;white-space:nowrap;font-family:'Liberation Mono',monospace;font-weight:350;font-size:15px;height:41px;line-height:41px;color:#fff">非平行志愿</div>
<div style="left:867px;top:635px;white-space:nowrap;font-family:'Liberation Mono',monospace;font-weight:350;font-size:15px;height:38px;line-height:38px;color:#fff">非平行志愿<span style='font-size:13.5px'>1-6</span></div>
<div style="left:867px;top:673px;white-space:nowrap;font-family:'Liberation Mono',monospace;font-weight:350;font-size:15px;height:36px;line-height:36px;color:#fff">非平行志愿<span style='font-size:13.5px'>1-6</span></div>
<div style="left:867px;top:709px;white-space:nowrap;font-family:'Liberation Mono',monospace;font-weight:350;font-size:15px;height:54px;line-height:54px;color:#fff">非平行志愿<span style='font-size:13.5px'>1-6</span></div>
<div style="left:867px;top:763px;white-space:nowrap;font-family:'Liberation Mono',monospace;font-weight:350;font-size:15px;height:54px;line-height:54px;color:#fff">非平行志愿</div>
<div style="left:867px;top:817px;white-space:nowrap;font-family:'Liberation Mono',monospace;font-weight:350;font-size:15px;height:37px;line-height:37px;color:#fff">非平行志愿</div>
<div style="left:867px;top:854px;white-space:nowrap;font-family:'Liberation Mono',monospace;font-weight:350;font-size:15px;height:36px;line-height:36px;color:#1a1a1a">平行志愿<span style='font-size:13.5px'>8-6</span></div>
<div style="left:867px;top:890px;white-space:nowrap;font-family:'Liberation Mono',monospace;font-weight:350;font-size:15px;height:34px;line-height:34px;color:#1a1a1a">平行志愿<span style='font-size:13.5px'>8-6</span></div>
<div style="left:867px;top:924px;white-space:nowrap;font-family:'Liberation Mono',monospace;font-weight:350;font-size:15px;height:41px;line-height:41px;color:#1a1a1a">平行志愿</div>
<div style="left:867px;top:965px;white-space:nowrap;font-family:'Liberation Mono',monospace;font-weight:350;font-size:15px;height:38px;line-height:38px;color:#1a1a1a">平行志愿<span style='font-size:13.5px'>8-6</span></div>
<div style="left:0px;top:184px;width:1863px;height:27px;background:#f0f0f0"></div>
<div style="left:35px;top:211px;width:1812px;height:1px;background:#d8d8d8"></div>
<div style="left:107px;top:191px;width:1px;height:20px;background:#d8d8d8"></div>
<div style="left:35px;top:189px;width:72px;height:26px;line-height:26px;text-align:center;font-size:13px;color:#444">A</div>
<div style="left:180px;top:191px;width:1px;height:20px;background:#d8d8d8"></div>
<div style="left:107px;top:189px;width:73px;height:26px;line-height:26px;text-align:center;font-size:13px;color:#444">B</div>
<div style="left:330px;top:191px;width:1px;height:20px;background:#d8d8d8"></div>
<div style="left:180px;top:189px;width:150px;height:26px;line-height:26px;text-align:center;font-size:13px;color:#444">C</div>
<div style="left:864px;top:191px;width:1px;height:20px;background:#d8d8d8"></div>
<div style="left:330px;top:189px;width:534px;height:26px;line-height:26px;text-align:center;font-size:13px;color:#444">D</div>
<div style="left:986px;top:191px;width:1px;height:20px;background:#d8d8d8"></div>
<div style="left:864px;top:189px;width:122px;height:26px;line-height:26px;text-align:center;font-size:13px;color:#444">E</div>
<div style="left:1058px;top:191px;width:1px;height:20px;background:#d8d8d8"></div>
<div style="left:986px;top:189px;width:72px;height:26px;line-height:26px;text-align:center;font-size:13px;color:#444">F</div>
<div style="left:1058px;top:191px;width:73px;height:19px;background:#dcdcdc"></div>
<div style="left:1058px;top:210px;width:73px;height:2px;background:#3a7a30"></div>
<div style="left:1130px;top:191px;width:1px;height:20px;background:#d8d8d8"></div>
<div style="left:1058px;top:189px;width:72px;height:26px;line-height:26px;text-align:center;font-size:13px;color:#1d5a50">G</div>
<div style="left:1202px;top:191px;width:1px;height:20px;background:#d8d8d8"></div>
<div style="left:1130px;top:189px;width:72px;height:26px;line-height:26px;text-align:center;font-size:13px;color:#444">H</div>
<div style="left:1274px;top:191px;width:1px;height:20px;background:#d8d8d8"></div>
<div style="left:1202px;top:189px;width:72px;height:26px;line-height:26px;text-align:center;font-size:13px;color:#444">I</div>
<div style="left:1346px;top:191px;width:1px;height:20px;background:#d8d8d8"></div>
<div style="left:1274px;top:189px;width:72px;height:26px;line-height:26px;text-align:center;font-size:13px;color:#444">J</div>
<div style="left:1418px;top:191px;width:1px;height:20px;background:#d8d8d8"></div>
<div style="left:1346px;top:189px;width:72px;height:26px;line-height:26px;text-align:center;font-size:13px;color:#444">K</div>
<div style="left:1490px;top:191px;width:1px;height:20px;background:#d8d8d8"></div>
<div style="left:1418px;top:189px;width:72px;height:26px;line-height:26px;text-align:center;font-size:13px;color:#444">L</div>
<div style="left:1562px;top:191px;width:1px;height:20px;background:#d8d8d8"></div>
<div style="left:1490px;top:189px;width:72px;height:26px;line-height:26px;text-align:center;font-size:13px;color:#444">M</div>
<div style="left:1634px;top:191px;width:1px;height:20px;background:#d8d8d8"></div>
<div style="left:1562px;top:189px;width:72px;height:26px;line-height:26px;text-align:center;font-size:13px;color:#444">N</div>
<div style="left:1706px;top:191px;width:1px;height:20px;background:#d8d8d8"></div>
<div style="left:1634px;top:189px;width:72px;height:26px;line-height:26px;text-align:center;font-size:13px;color:#444">O</div>
<div style="left:1778px;top:191px;width:1px;height:20px;background:#d8d8d8"></div>
<div style="left:1706px;top:189px;width:72px;height:26px;line-height:26px;text-align:center;font-size:13px;color:#444">P</div>
<div style="left:1778px;top:189px;width:72px;height:26px;line-height:26px;text-align:center;font-size:13px;color:#444">Q</div>
<div style="left:0px;top:211px;width:35px;height:780px;background:#f0f0f0"></div>
<div style="left:34px;top:211px;width:1px;height:780px;background:#d8d8d8"></div>
<div style="left:0px;top:273px;width:34px;height:1px;background:#d8d8d8"></div>
<div style="left:0px;top:211px;width:35px;height:62px;line-height:62px;text-align:center;font-size:13px;color:#444">1</div>
<div style="left:0px;top:335px;width:34px;height:1px;background:#d8d8d8"></div>
<div style="left:0px;top:273px;width:35px;height:62px;line-height:62px;text-align:center;font-size:13px;color:#444">2</div>
<div style="left:0px;top:371px;width:34px;height:1px;background:#d8d8d8"></div>
<div style="left:0px;top:335px;width:35px;height:36px;line-height:36px;text-align:center;font-size:13px;color:#444">3</div>
<div style="left:0px;top:403px;width:34px;height:1px;background:#d8d8d8"></div>
<div style="left:0px;top:371px;width:35px;height:32px;line-height:32px;text-align:center;font-size:13px;color:#444">4</div>
<div style="left:0px;top:431px;width:34px;height:1px;background:#d8d8d8"></div>
<div style="left:0px;top:403px;width:35px;height:28px;line-height:28px;text-align:center;font-size:13px;color:#444">5</div>
<div style="left:0px;top:460px;width:34px;height:1px;background:#d8d8d8"></div>
<div style="left:0px;top:431px;width:35px;height:29px;line-height:29px;text-align:center;font-size:13px;color:#444">6</div>
<div style="left:0px;top:489px;width:34px;height:1px;background:#d8d8d8"></div>
<div style="left:0px;top:460px;width:35px;height:29px;line-height:29px;text-align:center;font-size:13px;color:#444">7</div>
<div style="left:0px;top:551px;width:34px;height:1px;background:#d8d8d8"></div>
<div style="left:0px;top:489px;width:35px;height:62px;line-height:62px;text-align:center;font-size:13px;color:#444">8</div>
<div style="left:0px;top:591px;width:34px;height:1px;background:#d8d8d8"></div>
<div style="left:0px;top:551px;width:35px;height:40px;line-height:40px;text-align:center;font-size:13px;color:#444">9</div>
<div style="left:0px;top:632px;width:34px;height:1px;background:#d8d8d8"></div>
<div style="left:0px;top:591px;width:35px;height:41px;line-height:41px;text-align:center;font-size:13px;color:#444">10</div>
<div style="left:0px;top:670px;width:34px;height:1px;background:#d8d8d8"></div>
<div style="left:0px;top:632px;width:35px;height:38px;line-height:38px;text-align:center;font-size:13px;color:#444">11</div>
<div style="left:0px;top:706px;width:34px;height:1px;background:#d8d8d8"></div>
<div style="left:0px;top:670px;width:35px;height:36px;line-height:36px;text-align:center;font-size:13px;color:#444">12</div>
<div style="left:0px;top:706px;width:34px;height:55px;background:#dcdcdc"></div>
<div style="left:34px;top:706px;width:2px;height:55px;background:#3a7a30"></div>
<div style="left:0px;top:760px;width:34px;height:1px;background:#d8d8d8"></div>
<div style="left:0px;top:706px;width:35px;height:54px;line-height:54px;text-align:center;font-size:13px;color:#1d5a50">13</div>
<div style="left:0px;top:814px;width:34px;height:1px;background:#d8d8d8"></div>
<div style="left:0px;top:760px;width:35px;height:54px;line-height:54px;text-align:center;font-size:13px;color:#444">14</div>
<div style="left:0px;top:851px;width:34px;height:1px;background:#d8d8d8"></div>
<div style="left:0px;top:814px;width:35px;height:37px;line-height:37px;text-align:center;font-size:13px;color:#444">15</div>
<div style="left:0px;top:887px;width:34px;height:1px;background:#d8d8d8"></div>
<div style="left:0px;top:851px;width:35px;height:36px;line-height:36px;text-align:center;font-size:13px;color:#444">16</div>
<div style="left:0px;top:921px;width:34px;height:1px;background:#d8d8d8"></div>
<div style="left:0px;top:887px;width:35px;height:34px;line-height:34px;text-align:center;font-size:13px;color:#444">17</div>
<div style="left:0px;top:962px;width:34px;height:1px;background:#d8d8d8"></div>
<div style="left:0px;top:921px;width:35px;height:41px;line-height:41px;text-align:center;font-size:13px;color:#444">18</div>
<div style="left:0px;top:990px;width:34px;height:1px;background:#d8d8d8"></div>
<div style="left:0px;top:962px;width:35px;height:36px;line-height:36px;text-align:center;font-size:13px;color:#444">19</div>
<svg style="left:15px;top:198px" width="7" height="7"><path d="M7 0 L7 7 L0 7 Z" fill="#666"/></svg>
<div style="left:1057px;top:705px;width:75px;height:57px;border:2px solid #3a7a30;box-sizing:border-box"></div>
<div style="left:1128px;top:757px;width:5px;height:5px;background:#3a7a30;border:1px solid #fff"></div>
<div style="left:1061px;top:725px;width:1px;height:16px;background:#000"></div>
<div style="left:13px;top:157px;width:161px;height:26px;background:#fff;border-radius:4px;box-shadow:0 1px 0 #b8bdc0,0 0 0 1px #e0e5e7"></div>
<div style="left:66px;top:162px;white-space:nowrap;font-size:12px;line-height:17px;color:#222">SUMIF</div>
<svg style="left:158px;top:167px;" width="9" height="6" viewBox="0 0 9 6"><path d="M1 1 L4.5 4.5 L8 1" fill="none" stroke="#555" stroke-width="1.1"/></svg>
<div style="left:184px;top:157px;width:1665px;height:26px;background:#fff;border-radius:4px;box-shadow:0 1px 0 #b8bdc0,0 0 0 1px #e0e5e7"></div>
<svg style="left:196px;top:165px;" width="10" height="10" viewBox="0 0 10 10"><path d="M1 1 L9 9 M9 1 L1 9" stroke="#b84a68" stroke-width="1"/></svg>
<svg style="left:216px;top:164px;" width="13" height="11" viewBox="0 0 13 11"><path d="M1 6 L4.5 10 L12 1" fill="none" stroke="#2f7a62" stroke-width="1"/></svg>
<div style="left:238px;top:160px;white-space:nowrap;font-family:'Liberation Serif',serif;font-size:16px;line-height:20px;color:#333"><i>fx</i></div>
<div style="left:265px;top:162px;width:1px;height:17px;background:#e0e3e5"></div>
<div style="left:1863px;top:148px;width:57px;height:868px;background:#e3e9ec"></div>
<div style="left:1863px;top:148px;width:1px;height:868px;background:#d5dcdf"></div>
<div style="left:1885px;top:173px;width:14px;height:2px;background:#7d8387"></div>
<svg style="left:1884px;top:197px;" width="16" height="17" viewBox="0 0 16 17"><path d="M1.5 1.5 L14 6 L9 8.5 L13.5 13 L11.5 15 L7 10.5 L4.5 15 Z" fill="none" stroke="#8a9196" stroke-width="1.1" stroke-linejoin="round"/></svg>
<svg style="left:1884px;top:238px;" width="16" height="16" viewBox="0 0 16 16"><path d="M1 4 H15 M1 12 H15" stroke="#8a9196" stroke-width="1.1"/><ellipse cx="5" cy="4" rx="2" ry="2.6" fill="#e3e9ec" stroke="#8a9196" stroke-width="1.1"/><ellipse cx="11" cy="12" rx="2" ry="2.6" fill="#e3e9ec" stroke="#8a9196" stroke-width="1.1"/></svg>
<svg style="left:1884px;top:278px;" width="16" height="16" viewBox="0 0 16 16"><path d="M2 1 V15 H12 M4 3 H14 V13 M12 1 L14 3 L16 1 M10 13 L12 15" fill="none" stroke="#8a9196" stroke-width="1.1"/></svg>
<svg style="left:1884px;top:318px;" width="16" height="17" viewBox="0 0 16 17"><path d="M6 15 H1 V2 H11 A3 3 0 0 1 15 5 V8 M4 13 L8 6 M8 15 C8 9 14 9 15 15" fill="none" stroke="#8a9196" stroke-width="1.1"/></svg>
<svg style="left:1884px;top:358px;" width="16" height="17" viewBox="0 0 16 17"><path d="M1 15 L12 4 M3 12 L6 15 M12 1 L13 3 L15 4 L13 5 L12 7 L11 5 L9 4 L11 3 Z M2 5 L3 6 M14 12 L15 13" fill="none" stroke="#8a9196" stroke-width="1.1"/></svg>
<svg style="left:1884px;top:398px;" width="16" height="16" viewBox="0 0 16 16"><path d="M8 3 L1 1 V13 L8 15 L15 13 V1 Z M8 3 V15" fill="none" stroke="#8a9196" stroke-width="1.1"/><circle cx="11" cy="10" r="2.5" fill="#e3e9ec" stroke="#8a9196" stroke-width="1.1"/><path d="M13 12 L15.5 14.5" stroke="#8a9196" stroke-width="1.1"/></svg>
<svg style="left:1883px;top:437px;" width="18" height="18" viewBox="0 0 18 18"><circle cx="9" cy="9" r="8" fill="none" stroke="#8a9196" stroke-width="1.1"/><path d="M6.5 7 A2.5 2.5 0 1 1 9 9.5 V11" fill="none" stroke="#8a9196" stroke-width="1.1"/><circle cx="9" cy="13.5" r="0.8" fill="#8a9196"/></svg>
<svg style="left:1884px;top:481px;" width="16" height="6" viewBox="0 0 16 6"><circle cx="2.5" cy="3" r="2" fill="none" stroke="#8a9196" stroke-width="1"/><circle cx="8" cy="3" r="2" fill="none" stroke="#8a9196" stroke-width="1"/><circle cx="13.5" cy="3" r="2" fill="none" stroke="#8a9196" stroke-width="1"/></svg>
<div style="left:1847px;top:211px;width:16px;height:780px;background:#e6eaec"></div>
<div style="left:1850px;top:218px;width:8px;height:1.5px;background:#a9adb0"></div>
<svg style="left:1851px;top:229px;" width="7" height="5" viewBox="0 0 7 5"><path d="M3.5 0 L7 5 H0 Z" fill="#6f7478"/></svg>
<div style="left:1851px;top:243px;width:7px;height:462px;background:#c9cdd0;border-radius:3px"></div>
<svg style="left:1851px;top:976px;" width="7" height="5" viewBox="0 0 7 5"><path d="M0 0 H7 L3.5 5 Z" fill="#6f7478"/></svg>
<div style="left:0px;top:991px;width:1863px;height:25px;background:#e6ebee"></div>
<div style="left:0px;top:1015px;width:1863px;height:1px;background:#d6dbde"></div>
<svg style="left:15px;top:997px;" width="10" height="11" viewBox="0 0 10 11"><path d="M1 1 V10 M9 1 L4 5.5 L9 10" fill="none" stroke="#a9aeb1" stroke-width="1.4"/></svg>
<svg style="left:37px;top:997px;" width="7" height="11" viewBox="0 0 7 11"><path d="M6 1 L1.5 5.5 L6 10" fill="none" stroke="#a9aeb1" stroke-width="1.3"/></svg>
<svg style="left:59px;top:997px;" width="7" height="11" viewBox="0 0 7 11"><path d="M1 1 L5.5 5.5 L1 10" fill="none" stroke="#a9aeb1" stroke-width="1.3"/></svg>
<svg style="left:79px;top:997px;" width="10" height="11" viewBox="0 0 10 11"><path d="M1 1 L6 5.5 L1 10 M9 1 V10" fill="none" stroke="#a9aeb1" stroke-width="1.4"/></svg>
<div style="left:96px;top:994px;width:1px;height:19px;background:#d8dcdf"></div>
<div style="left:103px;top:991px;width:62px;height:23px;background:#fff;border-radius:0 0 5px 5px"></div>
<div style="left:114px;top:995px;white-space:nowrap;font-size:12.5px;line-height:16px;color:#167a5c;font-weight:bold">Sheet1</div>
<div style="left:180px;top:995px;white-space:nowrap;font-size:12.5px;line-height:16px;color:#222">Sheet2</div>
<div style="left:231px;top:995px;width:1px;height:17px;background:#d0d5d8"></div>
<div style="left:245px;top:995px;white-space:nowrap;font-size:12.5px;line-height:16px;color:#222">Sheet3</div>
<div style="left:296px;top:995px;width:1px;height:17px;background:#d0d5d8"></div>
<svg style="left:302px;top:998px;" width="11" height="11" viewBox="0 0 11 11"><path d="M5.5 0 V11 M0 5.5 H11" stroke="#222" stroke-width="1.8"/></svg>
<div style="left:1101px;top:998px;width:1px;height:9px;background:#bbb"></div>
<svg style="left:1114px;top:998px;" width="6" height="8" viewBox="0 0 6 8"><path d="M6 0 V8 L0 4 Z" fill="#666"/></svg>
<div style="left:1129px;top:999px;width:683px;height:8px;background:#c9cdd0;border-radius:4px"></div>
<svg style="left:1824px;top:998px;" width="6" height="8" viewBox="0 0 6 8"><path d="M0 0 V8 L6 4 Z" fill="#666"/></svg>
<div style="left:1842px;top:998px;width:1px;height:9px;background:#bbb"></div>
<div style="left:0px;top:1016px;width:1920px;height:24px;background:#e6ebee"></div>
<div style="left:17px;top:1020px;white-space:nowrap;color:#333"><span style='font-size:8px;line-height:8px;display:block;letter-spacing:-0.5px'>JSP</span></div>
<svg style="left:18px;top:1027px;" width="14" height="8" viewBox="0 0 14 8"><path d="M1 0 V7 H8 V3 H12 V0" fill="none" stroke="#333" stroke-width="1.1"/></svg>
<div style="left:43px;top:1020px;width:1px;height:16px;background:#d3d8db"></div>
<div style="left:53px;top:1020px;white-space:nowrap;font-size:12px;line-height:16px;color:#333">输入状态</div>
<svg style="left:1447px;top:1021px;" width="16" height="12" viewBox="0 0 16 12"><path d="M0.8 6 C4 0 12 0 15.2 6 C12 12 4 12 0.8 6 Z" fill="none" stroke="#333" stroke-width="1.1"/><circle cx="8" cy="6" r="2.2" fill="none" stroke="#333" stroke-width="1.1"/></svg>
<svg style="left:1482px;top:1020px;" width="15" height="15" viewBox="0 0 15 15"><path d="M5 2 V1 H10 V2 M5 13 V14 H10 V13 M1 5 H2 V10 H1 M14 5 H13 V10 H14" fill="none" stroke="#333" stroke-width="1.1"/><rect x="5" y="5" width="5" height="5" fill="none" stroke="#333" stroke-width="1.1"/></svg>
<svg style="left:1501px;top:1026px;" width="8" height="6" viewBox="0 0 8 6"><path d="M1 1 L4 4 L7 1" fill="none" stroke="#444" stroke-width="1.2"/></svg>
<div style="left:1524px;top:1020px;width:1px;height:16px;background:#d3d8db"></div>
<div style="left:1532px;top:1016px;width:23px;height:24px;background:#d7dcdf"></div>
<svg style="left:1538px;top:1021px;" width="13" height="13" viewBox="0 0 13 13"><rect x="0.6" y="0.6" width="11.8" height="11.8" fill="none" stroke="#333" stroke-width="1.1"/><path d="M0.6 4 H12.4 M4 0.6 V12.4" stroke="#333" stroke-width="1.1"/></svg>
<svg style="left:1569px;top:1021px;" width="14" height="13" viewBox="0 0 14 13"><rect x="0.6" y="0.6" width="12.8" height="11.8" fill="none" stroke="#333" stroke-width="1.1"/><path d="M7 0.6 V12.4" stroke="#333" stroke-width="1.1"/></svg>
<svg style="left:1601px;top:1021px;" width="14" height="13" viewBox="0 0 14 13"><path d="M0.6 10 V12.4 H13.4 V0.6 H11 M3 0.6 H11 V9 H0.6 V3" fill="none" stroke="#333" stroke-width="1.1"/></svg>
<div style="left:1628px;top:1020px;width:1px;height:16px;background:#d3d8db"></div>
<div style="left:1643px;top:1020px;white-space:nowrap;font-size:13px;line-height:16px;color:#333">100%</div>
<svg style="left:1687px;top:1026px;" width="8" height="6" viewBox="0 0 8 6"><path d="M1 1 L4 4 L7 1" fill="none" stroke="#444" stroke-width="1.2"/></svg>
<div style="left:1711px;top:1027px;width:12px;height:2px;background:#222"></div>
<div style="left:1737px;top:1027px;width:54px;height:2px;background:#2e6da4"></div>
<div style="left:1791px;top:1027px;width:52px;height:1.5px;background:#a8adb0"></div>
<svg style="left:1786px;top:1023px;" width="10" height="10" viewBox="0 0 10 10"><circle cx="5" cy="5" r="4" fill="#8a9196" stroke="#fff" stroke-width="1.5"/></svg>
<svg style="left:1858px;top:1022px;" width="11" height="11" viewBox="0 0 11 11"><path d="M5.5 0 V11 M0 5.5 H11" stroke="#222" stroke-width="1.8"/></svg>
<svg style="left:1890px;top:1021px;" width="13" height="13" viewBox="0 0 13 13"><path d="M0.6 4 V0.6 H4 M9 0.6 H12.4 V4 M12.4 9 V12.4 H9 M4 12.4 H0.6 V9 M1 1 L4.5 4.5 M12 1 L8.5 4.5 M12 12 L8.5 8.5 M1 12 L4.5 8.5" fill="none" stroke="#333" stroke-width="1.1"/></svg>
<div style="left:0px;top:1040px;width:1920px;height:40px;background:linear-gradient(90deg,#1f3a42 0%,#1e3344 50%,#1b2a44 100%)"></div>
<svg style="left:16px;top:1052px;" width="17" height="17" viewBox="0 0 17 17"><path d="M0 2.3 L7 1.3 V8 H0 Z M8 1.1 L17 0 V8 H8 Z M0 9 H7 V15.7 L0 14.7 Z M8 9 H17 V17 L8 15.9 Z" fill="#fff"/></svg>
<svg style="left:60px;top:1048px;" width="24" height="24" viewBox="0 0 24 24"><circle cx="14" cy="9.5" r="7.5" fill="none" stroke="#fff" stroke-width="2"/><path d="M8.7 14.8 L2 21.5" stroke="#fff" stroke-width="2.4" stroke-linecap="round"/></svg>
<svg style="left:111px;top:1047px" width="24" height="25" viewBox="0 0 24 25"><defs><radialGradient id="ff" cx="0.4" cy="0.6" r="0.7"><stop offset="0" stop-color="#ffbd4f"/><stop offset="0.5" stop-color="#ff6a3d"/><stop offset="1" stop-color="#e02f5c"/></radialGradient></defs><circle cx="12" cy="13.5" r="11" fill="url(#ff)"/><circle cx="12" cy="13" r="5.5" fill="#7b3fe4"/><path d="M3 9 C5 3 10 2 13 4 C16 1 20 0 18 4" fill="#ffb13b"/></svg>
<svg style="left:160px;top:1051px;" width="23" height="19" viewBox="0 0 23 19"><path d="M0 2 H8 L10 4 H23 V19 H0 Z" fill="#f5c84c"/><rect x="0" y="6" width="23" height="13" fill="#ffd866"/><rect x="6" y="11" width="11" height="8" fill="#3b8fd4"/><rect x="9" y="14" width="5" height="5" fill="#ffd866"/></svg>
<div style="left:197px;top:1040px;width:44px;height:40px;background:#3d5059"></div>
<svg style="left:208px;top:1051px;" width="25" height="19" viewBox="0 0 25 19"><path d="M2 2 L7.5 17 L12.5 7 L17.5 17 L23 2" fill="none" stroke="#e8332a" stroke-width="4.2" stroke-linejoin="round"/></svg>
<div style="left:242px;top:1043px;width:1px;height:34px;background:#34474f"></div>
<svg style="left:258px;top:1048px;" width="24" height="24" viewBox="0 0 24 24"><rect x="0" y="0" width="24" height="24" rx="5" fill="#22b585"/><path d="M6 5 L12 12 L6 18 Z M18 5 L12 12 L18 18 Z" fill="none" stroke="#fff" stroke-width="2"/><rect x="10" y="19" width="4" height="1.5" fill="#fff"/></svg>
<svg style="left:307px;top:1049px;" width="23" height="23" viewBox="0 0 23 23"><rect x="0" y="0" width="23" height="23" rx="5" fill="#1a1e24"/><path d="M6 4 L8 7 M17 4 L15 7 M4 9 H19 V17 H4 Z" fill="none" stroke="#fff" stroke-width="1.6"/><path d="M1 18 C4 21 19 21 22 10" fill="none" stroke="#fff" stroke-width="1.5"/><circle cx="9" cy="13" r="1.2" fill="#fff"/><circle cx="14" cy="13" r="1.2" fill="#fff"/></svg>
<div style="left:103px;top:1078px;width:39px;height:2px;background:#76a9d6"></div>
<div style="left:152px;top:1078px;width:39px;height:2px;background:#76a9d6"></div>
<div style="left:197px;top:1078px;width:44px;height:2px;background:#76a9d6"></div>
<div style="left:250px;top:1078px;width:40px;height:2px;background:#76a9d6"></div>
<div style="left:299px;top:1078px;width:40px;height:2px;background:#76a9d6"></div>
<svg style="left:1694px;top:1055px;" width="12" height="8" viewBox="0 0 12 8"><path d="M1 7 L6 1.5 L11 7" fill="none" stroke="#fff" stroke-width="1.4"/></svg>
<svg style="left:1718px;top:1051px;" width="12" height="18" viewBox="0 0 12 18"><rect x="2.5" y="0.5" width="7" height="11" rx="3.5" fill="#fff"/><path d="M1 8 A5 5 0 0 0 11 8 M6 13 V16 M3 16.5 H9" fill="none" stroke="#fff" stroke-width="1.1"/></svg>
<svg style="left:1740px;top:1052px;" width="17" height="16" viewBox="0 0 17 16"><path d="M1 5 H4 L8 1.5 V14.5 L4 11 H1 Z M10.5 5 A4 4 0 0 1 10.5 11 M12.5 3 A7 7 0 0 1 12.5 13 M14.5 1 A10 10 0 0 1 14.5 15" fill="none" stroke="#fff" stroke-width="1.1"/></svg>
<svg style="left:1767px;top:1054px;" width="13" height="13" viewBox="0 0 13 13"><path d="M1 12 A11 11 0 0 1 12 1 M3.5 12 A8.5 8.5 0 0 1 12 3.5 M6 12 A6 6 0 0 1 12 6 M8.5 12 A3.5 3.5 0 0 1 12 8.5" fill="none" stroke="#fff" stroke-width="1"/><circle cx="11" cy="11" r="1.4" fill="#fff"/></svg>
<div style="left:1788px;top:1051px;white-space:nowrap;font-size:14px;line-height:18px;color:#fff">中</div>
<svg style="left:1815px;top:1050px;" width="18" height="19" viewBox="0 0 18 19"><path d="M1 4 L14 1 L17 14 L4 17 Z" fill="#36b536"/><path d="M12 5 C8 4 5 6 6 8 C7 10 12 8 13 10.5 C14 13 9 14 6 13" fill="none" stroke="#fff" stroke-width="2"/></svg>
<div style="left:1858px;top:1043px;white-space:nowrap;font-size:12.5px;line-height:16px;color:#fff;width:42px;text-align:center">18:20</div>
<div style="left:1846px;top:1061px;white-space:nowrap;font-size:12.5px;line-height:16px;color:#fff;width:66px;text-align:center">2024/4/30</div>
<div style="left:1915px;top:1040px;width:1px;height:40px;background:#5a6775"></div>
</body></html>
